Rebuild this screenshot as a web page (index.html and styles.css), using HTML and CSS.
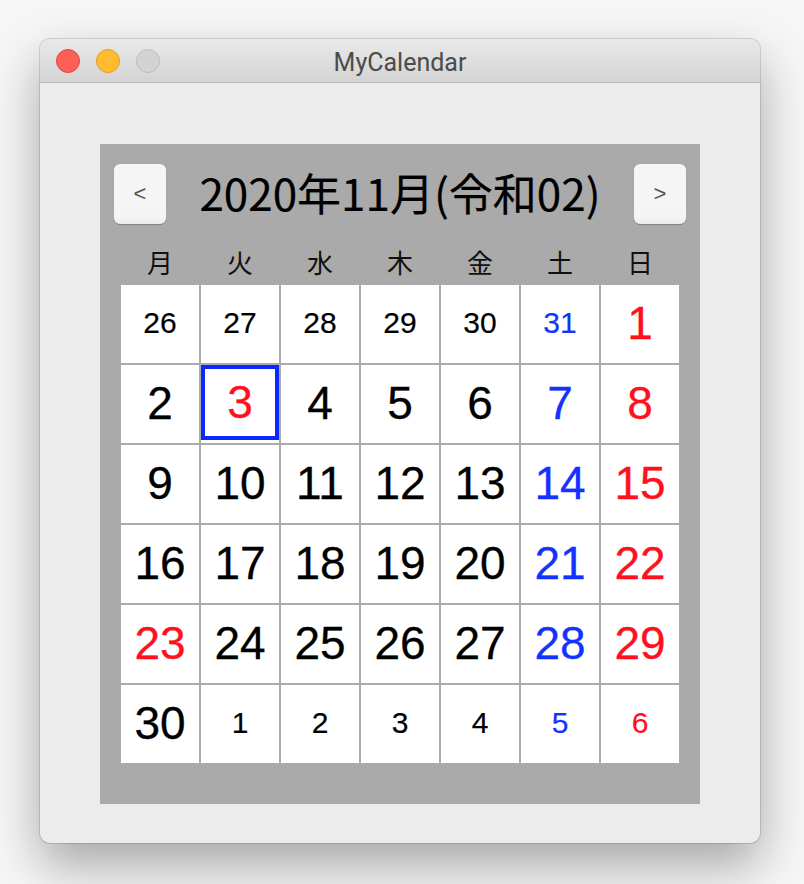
FILE: index.html
```html
<!DOCTYPE html>
<html lang="ja">
<head>
<meta charset="utf-8">
<title>MyCalendar</title>
<link rel="stylesheet" href="styles.css">
</head>
<body>
<div class="window">
  <div class="titlebar">
    <div class="lights">
      <span class="light red"></span>
      <span class="light yellow"></span>
      <span class="light gray"></span>
    </div>
    <div class="wtitle">MyCalendar</div>
  </div>
  <div class="content">
    <div class="panel">
      <div class="header">
        <div class="btn">&lt;</div>
        <div class="month">2020年11月(令和02)</div>
        <div class="btn">&gt;</div>
      </div>
      <div class="weekdays">
        <div>月</div><div>火</div><div>水</div><div>木</div><div>金</div><div>土</div><div>日</div>
      </div>
      <div class="grid">
        <div class="cell small">26</div>
        <div class="cell small">27</div>
        <div class="cell small">28</div>
        <div class="cell small">29</div>
        <div class="cell small">30</div>
        <div class="cell small sat">31</div>
        <div class="cell sun">1</div>

        <div class="cell">2</div>
        <div class="cell sel"><div class="selbox hol">3</div></div>
        <div class="cell">4</div>
        <div class="cell">5</div>
        <div class="cell">6</div>
        <div class="cell sat">7</div>
        <div class="cell sun">8</div>

        <div class="cell">9</div>
        <div class="cell">10</div>
        <div class="cell">11</div>
        <div class="cell">12</div>
        <div class="cell">13</div>
        <div class="cell sat">14</div>
        <div class="cell sun">15</div>

        <div class="cell">16</div>
        <div class="cell">17</div>
        <div class="cell">18</div>
        <div class="cell">19</div>
        <div class="cell">20</div>
        <div class="cell sat">21</div>
        <div class="cell sun">22</div>

        <div class="cell sun">23</div>
        <div class="cell">24</div>
        <div class="cell">25</div>
        <div class="cell">26</div>
        <div class="cell">27</div>
        <div class="cell sat">28</div>
        <div class="cell sun">29</div>

        <div class="cell">30</div>
        <div class="cell small">1</div>
        <div class="cell small">2</div>
        <div class="cell small">3</div>
        <div class="cell small">4</div>
        <div class="cell small sat">5</div>
        <div class="cell small sun">6</div>
      </div>
    </div>
  </div>
</div>
</body>
</html>
```
FILE: styles.css
```css
html, body {
  margin: 0;
  padding: 0;
}
body {
  background: #f6f6f6;
  padding: 39px 44px 0 40px;
  height: 884px;
  box-sizing: border-box;
  overflow: hidden;
}
.window {
  width: 720px;
  border-radius: 10px;
  overflow: hidden;
  box-shadow: 0 0 0 1px rgba(0,0,0,0.13), 0 22px 50px rgba(0,0,0,0.33);
  background: #ececec;
}
.titlebar {
  height: 43px;
  border-bottom: 1px solid #b9b9b9;
  background: linear-gradient(#e9e9e9, #d4d4d4);
  display: flex;
  align-items: center;
  position: relative;
}
.lights {
  display: flex;
  gap: 16px;
  padding-left: 16px;
}
.light {
  width: 24px;
  height: 24px;
  border-radius: 50%;
  box-sizing: border-box;
}
.red { background: #fe5f57; border: 1px solid #e1453f; }
.yellow { background: #febc2e; border: 1px solid #dfa023; }
.gray { background: #d3d3d3; border: 1px solid #bdbdbd; }
.wtitle {
  position: absolute;
  left: 0;
  right: 0;
  top: 3px;
  bottom: 0;
  display: flex;
  align-items: center;
  justify-content: center;
  font-family: Roboto, "Liberation Sans", sans-serif;
  font-size: 25px;
  color: #4b4b4b;
  pointer-events: none;
}
.content {
  padding: 61px 60px 39px;
}
.panel {
  background: #aaaaaa;
  height: 660px;
  box-sizing: border-box;
  padding-top: 20px;
}
.header {
  display: flex;
  justify-content: space-between;
  align-items: center;
  padding: 0 14px;
  height: 60px;
}
.btn {
  width: 52px;
  height: 60px;
  box-sizing: border-box;
  border-radius: 6px;
  background: linear-gradient(#f6f6f6 0%, #f4f4f4 88%, #ececec 100%);
  box-shadow: 0 0.5px 1px rgba(0,0,0,0.25);
  display: flex;
  align-items: center;
  justify-content: center;
  font-family: "Liberation Sans", sans-serif;
  font-size: 22px;
  color: #555;
}
.month {
  font-family: "Noto Sans CJK JP", sans-serif;
  font-size: 44px;
  color: #000;
  line-height: 60px;
  margin-top: -4px;
  -webkit-text-stroke: 0.2px #000;
}
.weekdays {
  display: grid;
  grid-template-columns: repeat(7, 78px);
  column-gap: 2px;
  margin: 0 21px;
  padding-top: 13px;
  height: 61px;
  box-sizing: border-box;
  font-family: "Noto Sans CJK JP", sans-serif;
  font-size: 26px;
  color: #111;
}
.weekdays div {
  display: flex;
  align-items: center;
  justify-content: center;
}
.grid {
  display: grid;
  grid-template-columns: repeat(7, 78px);
  grid-template-rows: repeat(6, 78px);
  gap: 2px;
  margin: 0 21px;
}
.cell {
  background: #fff;
  display: flex;
  align-items: center;
  justify-content: center;
  padding-bottom: 3px;
  box-sizing: border-box;
  font-family: "Liberation Sans", sans-serif;
  font-size: 46px;
  color: #000;
  -webkit-text-stroke: 0.3px currentColor;
}
.cell.small {
  font-size: 30px;
  -webkit-text-stroke: 0.2px currentColor;
}
.cell.sat { color: #1432ff; }
.cell.sun { color: #ff1020; }
.cell.sel {
  align-items: flex-start;
  padding-bottom: 0;
}
.selbox {
  width: 100%;
  height: 75px;
  box-sizing: border-box;
  border: 4px solid #0a28ff;
  display: flex;
  align-items: center;
  justify-content: center;
  padding-bottom: 2px;
}
.selbox.hol { color: #ff1020; }
```
